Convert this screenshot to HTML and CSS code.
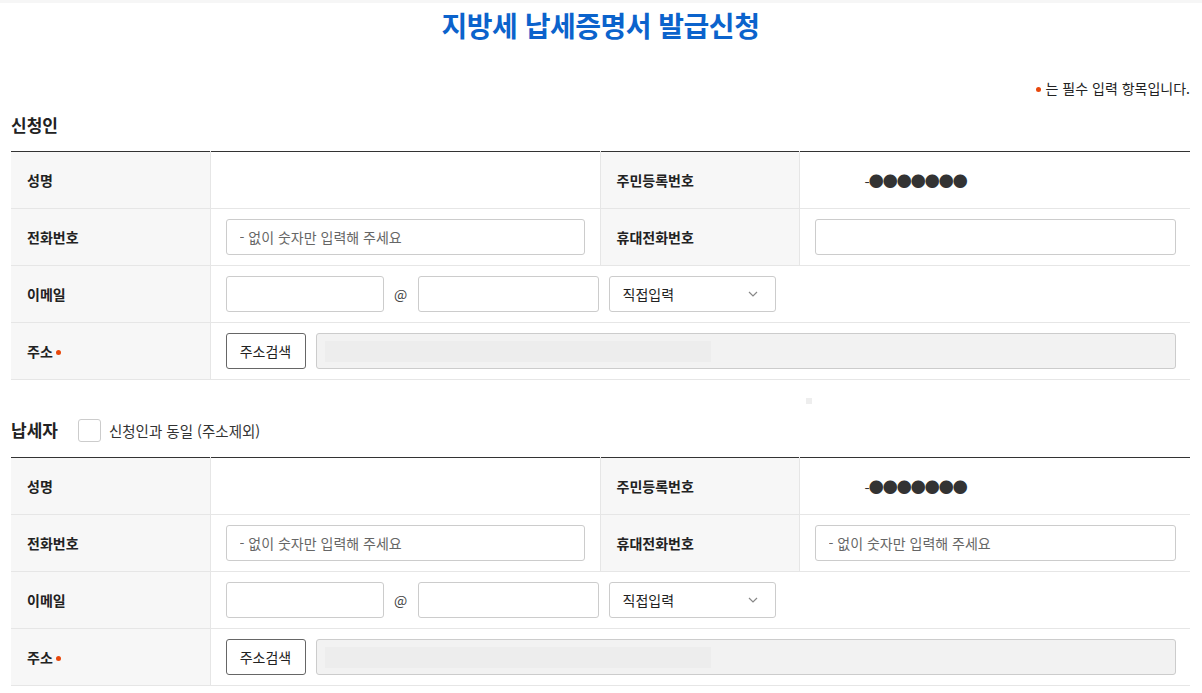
FILE: index.html
```html
<!DOCTYPE html>
<html lang="ko">
<head>
    <meta charset="UTF-8">
    <meta name="viewport" content="width=device-width, initial-scale=1.0">
    <title>지방세 납세증명서 발급신청</title>
    <link rel="stylesheet" href="styles.css">
</head>
<body>
    <div class="top-strip"></div>
    <div class="page">
        <h1 class="page-title">지방세 납세증명서 발급신청</h1>
        <p class="req-note"><span class="req"></span>는 필수 입력 항목입니다.</p>

        <!-- 신청인 -->
        <div class="sec-head">
            <h2 class="sec-title">신청인</h2>
        </div>
        <table class="form-table">
            <colgroup>
                <col class="c-th"><col class="c-td"><col class="c-th"><col class="c-td2">
            </colgroup>
            <tr>
                <th>성명</th>
                <td></td>
                <th>주민등록번호</th>
                <td><span class="jumin">-●●●●●●●</span></td>
            </tr>
            <tr>
                <th>전화번호</th>
                <td><input class="txt" type="text" placeholder="- 없이 숫자만 입력해 주세요"></td>
                <th>휴대전화번호</th>
                <td><input class="txt" type="text"></td>
            </tr>
            <tr>
                <th>이메일</th>
                <td colspan="3">
                    <div class="email">
                        <input class="txt mail-id" type="text">
                        <span class="at">@</span>
                        <input class="txt mail-dom" type="text">
                        <div class="sel">직접입력<svg class="chev" width="10" height="6" viewBox="0 0 10 6"><path d="M1 1l4 4 4-4" fill="none" stroke="#888" stroke-width="1.2"/></svg></div>
                    </div>
                </td>
            </tr>
            <tr>
                <th>주소<span class="req"></span></th>
                <td colspan="3">
                    <div class="addr">
                        <button class="btn">주소검색</button>
                        <div class="addr-box"><span class="addr-fill"></span></div>
                    </div>
                </td>
            </tr>
        </table>

        <span class="loader"></span>

        <!-- 납세자 -->
        <div class="sec-head sec2">
            <h2 class="sec-title">납세자</h2>
            <label class="chk"><span class="box"></span>신청인과 동일 (주소제외)</label>
        </div>
        <table class="form-table">
            <colgroup>
                <col class="c-th"><col class="c-td"><col class="c-th"><col class="c-td2">
            </colgroup>
            <tr>
                <th>성명</th>
                <td></td>
                <th>주민등록번호</th>
                <td><span class="jumin">-●●●●●●●</span></td>
            </tr>
            <tr>
                <th>전화번호</th>
                <td><input class="txt" type="text" placeholder="- 없이 숫자만 입력해 주세요"></td>
                <th>휴대전화번호</th>
                <td><input class="txt" type="text" placeholder="- 없이 숫자만 입력해 주세요"></td>
            </tr>
            <tr>
                <th>이메일</th>
                <td colspan="3">
                    <div class="email">
                        <input class="txt mail-id" type="text">
                        <span class="at">@</span>
                        <input class="txt mail-dom" type="text">
                        <div class="sel">직접입력<svg class="chev" width="10" height="6" viewBox="0 0 10 6"><path d="M1 1l4 4 4-4" fill="none" stroke="#888" stroke-width="1.2"/></svg></div>
                    </div>
                </td>
            </tr>
            <tr>
                <th>주소<span class="req"></span></th>
                <td colspan="3">
                    <div class="addr">
                        <button class="btn">주소검색</button>
                        <div class="addr-box"><span class="addr-fill"></span></div>
                    </div>
                </td>
            </tr>
        </table>
    </div>
</body>
</html>
```

FILE: styles.css
```css
body {
    margin: 0;
    background: #fff;
    color: #222;
    font-family: "Noto Sans CJK KR", "Noto Sans", sans-serif;
    font-size: 14px;
}

.top-strip {
    height: 3px;
    background: #f6f6f6;
}

.page {
    position: relative;
    padding: 0 12px 0 11px;
}

.page-title {
    margin: 0;
    padding-top: 3px;
    font-size: 28px;
    line-height: 38px;
    font-weight: 700;
    color: #0b63cc;
    text-align: center;
    letter-spacing: -0.5px;
}

.req-note {
    margin: 34px 0 0;
    line-height: 20px;
    font-size: 14px;
    text-align: right;
    color: #222;
}

.req {
    display: inline-block;
    width: 5px;
    height: 5px;
    border-radius: 50%;
    background: #e8480c;
    margin: 0 5px 2px 3px;
    vertical-align: middle;
}

.req-note .req {
    margin: 0 5px 2px 0;
}

.sec-head {
    display: flex;
    align-items: center;
    height: 24px;
    margin: 15px 0 14px;
}

.sec2 {
    margin: 38px 0 15px;
}

.sec-title {
    margin: 0;
    font-size: 17px;
    font-weight: 700;
    line-height: 24px;
}

.chk {
    display: flex;
    align-items: center;
    margin-left: 20px;
    font-size: 14.5px;
    color: #333;
}

.chk .box {
    width: 23px;
    height: 23px;
    border: 1px solid #ccc;
    border-radius: 3px;
    box-sizing: border-box;
    margin-right: 8px;
}

.form-table {
    width: 100%;
    border-collapse: collapse;
    border-top: 1px solid #333;
    table-layout: fixed;
}

.c-th { width: 199px; }
.c-td { width: 390px; }
.c-td2 { width: auto; }

.form-table th,
.form-table td {
    height: 57px;
    border-bottom: 1px solid #e6e6e6;
    padding: 0 15px;
    box-sizing: border-box;
    text-align: left;
}

.form-table th {
    background: #f7f7f7;
    font-weight: 700;
    font-size: 14px;
    padding-left: 16px;
    border-right: 1px solid #e6e6e6;
}

.form-table td + th {
    border-left: 1px solid #e6e6e6;
}

.form-table td:last-child {
    padding-right: 14px;
}

.jumin {
    margin-left: 50px;
    font-size: 15px;
    color: #333;
    letter-spacing: -1px;
}

.txt {
    display: block;
    width: 100%;
    height: 36px;
    box-sizing: border-box;
    border: 1px solid #ccc;
    border-radius: 3px;
    padding: 0 13px;
    font-family: inherit;
    font-size: 14px;
    color: #222;
    background: #fff;
}

.txt::placeholder {
    color: #666;
}

.email {
    display: flex;
    align-items: center;
}

.mail-id { width: 158px; }
.mail-dom { width: 181px; }

.at {
    width: 34px;
    text-align: center;
    font-size: 14px;
    color: #444;
}

.sel {
    display: flex;
    align-items: center;
    justify-content: space-between;
    width: 167px;
    height: 36px;
    box-sizing: border-box;
    margin-left: 10px;
    padding: 0 17px 0 13px;
    border: 1px solid #ccc;
    border-radius: 3px;
    font-size: 14px;
    color: #222;
}

.addr {
    display: flex;
    align-items: center;
}

.btn {
    width: 80px;
    height: 36px;
    flex-shrink: 0;
    border: 1px solid #666;
    border-radius: 3px;
    background: #fff;
    font-family: inherit;
    font-size: 14px;
    color: #222;
    padding: 0;
}

.addr-box {
    flex: 1;
    height: 36px;
    margin-left: 10px;
    box-sizing: border-box;
    border: 1px solid #ccc;
    border-radius: 3px;
    background: #f2f2f2;
    padding: 7px 8px;
}

.addr-fill {
    display: block;
    width: 386px;
    height: 21px;
    background: #ededed;
}

.loader {
    position: absolute;
    left: 806px;
    top: 395px;
    width: 6px;
    height: 6px;
    background: #eee;
}
```
